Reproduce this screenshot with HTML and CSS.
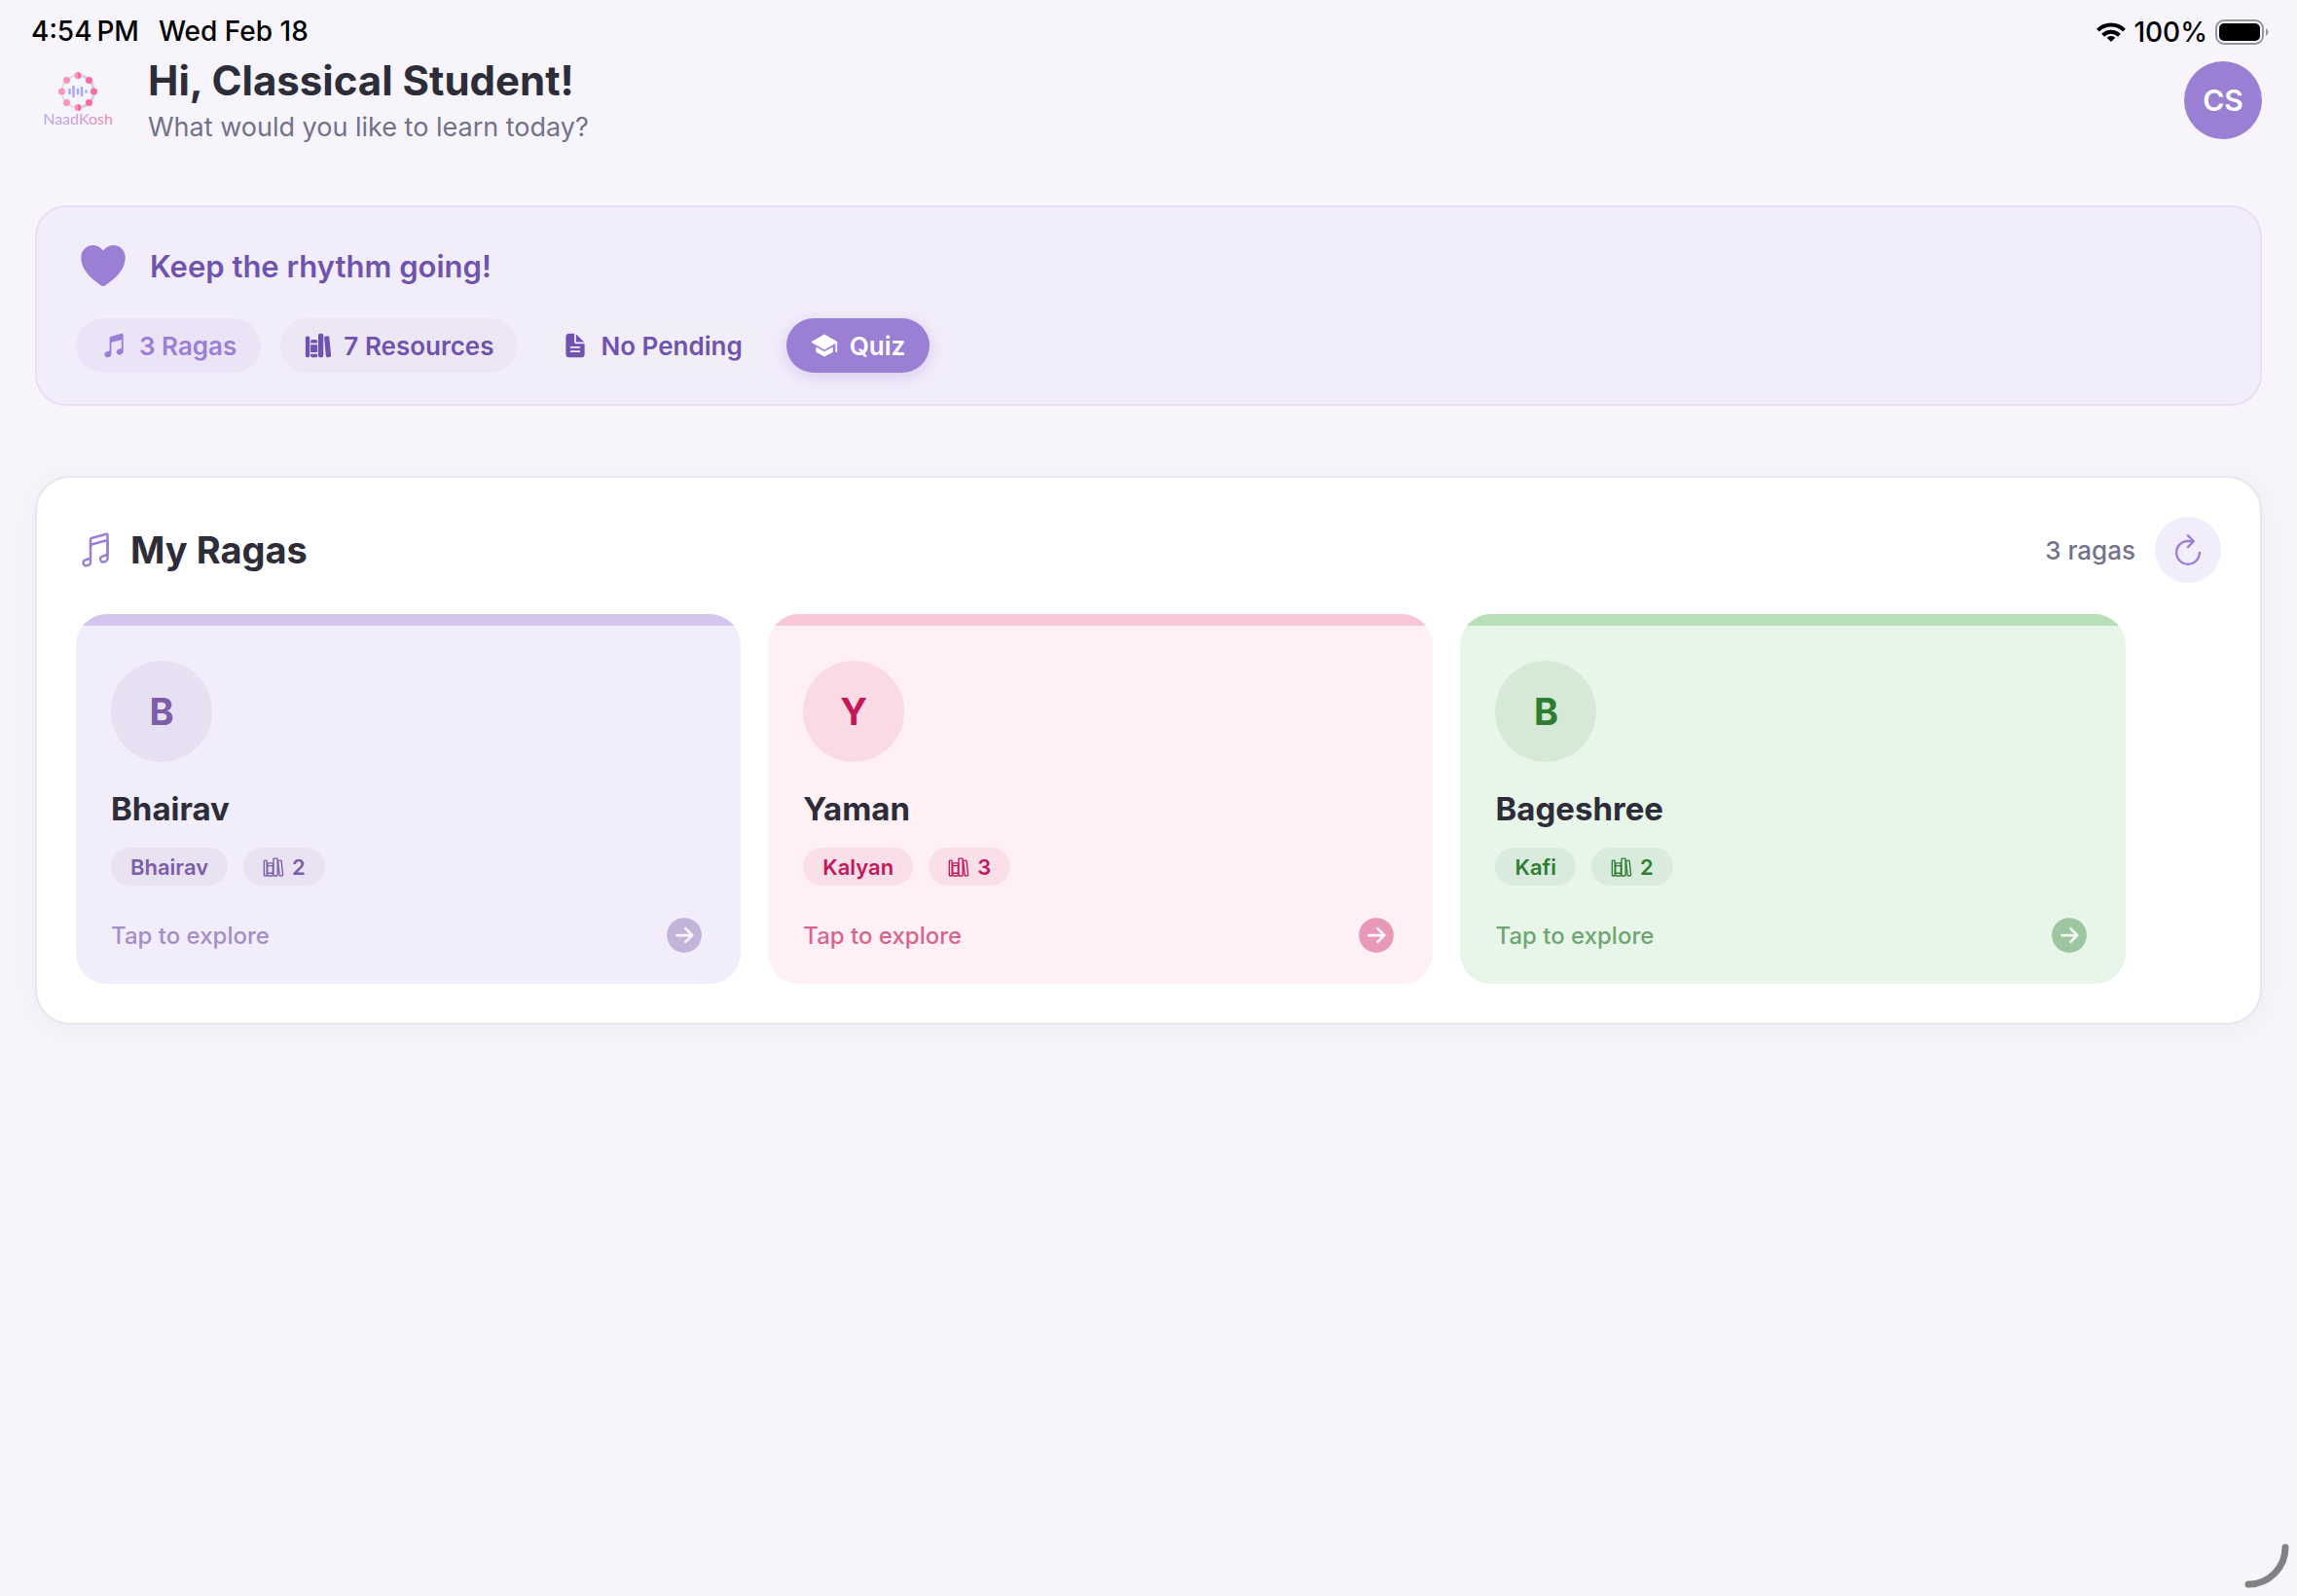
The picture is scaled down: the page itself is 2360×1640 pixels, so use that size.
FILE: index.html
```html
<!DOCTYPE html>
<html lang="en">
<head>
    <meta charset="UTF-8">
    <meta name="viewport" content="width=device-width, initial-scale=1.0">
    <title>NaadKosh</title>
    <link rel="stylesheet" href="styles.css">
</head>
<body>
    <!-- shared icons -->
    <svg class="sprite" aria-hidden="true">
        <symbol id="notes" viewBox="0 0 512 512">
            <path fill="currentColor" d="M421.84 37.37a25.86 25.86 0 00-22.6-4.46L199.92 86.49A32.3 32.3 0 00176 118v226c0 6.74-4.36 12.56-11.11 14.83l-.12.05-52 18C92.88 383.53 80 402 80 423.91a55.54 55.54 0 0023.23 45.63A54.78 54.78 0 00135.34 480a55.82 55.82 0 0017.75-2.93l.38-.13 21.84-7.94A47.84 47.84 0 00208 423.91v-212c0-7.29 4.77-13.21 12.16-15.07l.21-.06L395 150.14a4 4 0 015 3.86v141.93c0 6.75-4.25 12.38-11.11 14.68l-.25.09-50.89 18.11A49.09 49.09 0 00304 375.92a55.67 55.67 0 0023.23 45.8 54.63 54.63 0 0049.88 7.35l.36-.12 21.84-7.95A47.83 47.83 0 00432 375.92V58a25.74 25.74 0 00-10.16-20.63z"/>
        </symbol>
        <symbol id="books" viewBox="0 0 512 512">
            <g fill="none" stroke="currentColor" stroke-width="32" stroke-linejoin="round">
                <rect x="32" y="96" width="64" height="368" rx="16"/>
                <path d="M112 224h128M112 400h128"/>
                <rect x="112" y="160" width="128" height="304" rx="16"/>
                <rect x="256" y="48" width="96" height="416" rx="16"/>
                <path d="M422.46 96.11l-40.4 4.25c-11.12 1.17-19.18 11.57-17.93 23.1l34.92 321.59c1.26 11.53 11.37 20 22.49 18.84l40.4-4.25c11.12-1.17 19.18-11.57 17.93-23.1L445 115c-1.31-11.58-11.42-20.06-22.54-18.89z"/>
            </g>
        </symbol>
        <symbol id="arrow" viewBox="0 0 512 512">
            <path fill="currentColor" d="M256 48a208 208 0 100 416 208 208 0 000-416z"/>
            <path class="arrow-line" d="M168 256h176M272 176l80 80-80 80"/>
        </symbol>
    </svg>

    <div class="status">
        <div class="status-left">
            <span>4:54&thinsp;PM</span>
            <span>Wed Feb 18</span>
        </div>
        <div class="status-right">
            <svg class="wifi" viewBox="0 0 30 20">
                <g fill="none" stroke="#000" stroke-width="4">
                    <path d="M1.5 8.2a19 19 0 0 1 27 0"/>
                    <path d="M6.6 13.2a12 12 0 0 1 16.8 0"/>
                </g>
                <path d="M15 20l-4.300-4.300a6.200 6.200 0 0 1 8.600 0z"/>
            </svg>
            <span>100%</span>
            <svg class="battery" viewBox="0 0 56 26">
                <rect x="1" y="1" width="48" height="24" rx="8" fill="none" stroke="#98969b" stroke-width="2"/>
                <rect x="4" y="4" width="42" height="18" rx="5"/>
                <path d="M52 9a4.500 4.500 0 0 1 0 8z" fill="#98969b"/>
            </svg>
        </div>
    </div>

    <header class="header">
        <svg class="logo" viewBox="0 0 88 80" role="img" aria-label="NaadKosh">
            <defs>
                <linearGradient id="word" x1="0" x2="1">
                    <stop offset="0" stop-color="#aeaaf0"/>
                    <stop offset=".5" stop-color="#cf9fd8"/>
                    <stop offset="1" stop-color="#f288ae"/>
                </linearGradient>
                <linearGradient id="dot" x1="0" x2="1">
                    <stop offset=".5" stop-color="#ff94bb"/>
                    <stop offset=".5" stop-color="#ff6a9e"/>
                </linearGradient>
            </defs>
            <circle cx="44" cy="31" r="16.500" fill="none" stroke="#dfdcea" stroke-width="2"/>
            <path d="M44 14.500a16.500 16.500 0 0 1 0 33" fill="none" stroke="#cfd3ee" stroke-width="3"/>
            <g fill="#ff94bb">
                <circle cx="32.500" cy="19.500" r="3.500"/>
                <circle cx="27.500" cy="31" r="3.500"/>
                <circle cx="32.500" cy="42.500" r="3.500"/>
            </g>
            <g fill="#ff6a9e">
                <circle cx="55.500" cy="19.500" r="3.500"/>
                <circle cx="60.500" cy="31" r="3.500"/>
                <circle cx="55.500" cy="42.500" r="3.500"/>
            </g>
            <circle cx="44" cy="14.500" r="3.500" fill="url(#dot)"/>
            <circle cx="44" cy="47.500" r="3.500" fill="url(#dot)"/>
            <g fill="none" stroke="#a9a6f7" stroke-width="2.500" stroke-linecap="round">
                <path d="M35.500 29v4M39.500 26v10M44 29v4M48 27v8M52.500 30.500v1"/>
            </g>
            <text class="logo-text" x="44" y="65" text-anchor="middle" fill="url(#word)">NaadKosh</text>
        </svg>
        <div class="greeting">
            <h1>Hi, Classical Student!</h1>
            <p>What would you like to learn today?</p>
        </div>
        <button type="button" class="profile">CS</button>
    </header>

    <main>
        <section class="rhythm">
            <div class="rhythm-title">
                <svg class="heart" viewBox="0 0 512 512">
                    <path fill="currentColor" d="M256 448a32 32 0 01-18-5.57c-78.59-53.35-112.62-89.93-131.39-112.8-40-48.75-59.15-98.8-58.61-153C48.63 114.52 98.46 64 159.08 64c44.08 0 74.61 24.83 92.39 45.51a6 6 0 009.06 0C278.31 88.81 308.84 64 352.92 64 413.54 64 463.37 114.52 464 176.64c.54 54.21-18.63 104.26-58.61 153-18.77 22.87-52.8 59.45-131.39 112.8A32 32 0 01256 448z"/>
                </svg>
                <h2>Keep the rhythm going!</h2>
            </div>
            <div class="chips">
                <button type="button" class="chip chip-ragas">
                    <svg><use href="#notes"/></svg>3 Ragas
                </button>
                <button type="button" class="chip chip-resources">
                    <svg viewBox="0 0 512 512" fill="currentColor">
                        <path d="M64 480H48a32 32 0 01-32-32V112a32 32 0 0132-32h16a32 32 0 0132 32v336a32 32 0 01-32 32zM240 176a32 32 0 00-32-32h-64a32 32 0 00-32 32v28a4 4 0 004 4h120a4 4 0 004-4zM112 448a32 32 0 0032 32h64a32 32 0 0032-32v-30a2 2 0 00-2-2H114a2 2 0 00-2 2z"/>
                        <rect x="112" y="240" width="128" height="144" rx="2"/>
                        <path d="M320 480h-32a32 32 0 01-32-32V64a32 32 0 0132-32h32a32 32 0 0132 32v384a32 32 0 01-32 32zM495.89 445.45l-32.23-340c-1.48-15.65-16.94-27-34.53-25.31l-31.85 3c-17.59 1.67-30.65 15.71-29.17 31.36l32.23 340c1.48 15.65 16.94 27 34.53 25.31l31.85-3c17.59-1.67 30.65-15.71 29.17-31.36z"/>
                    </svg>7 Resources
                </button>
                <button type="button" class="chip chip-pending">
                    <svg viewBox="0 0 512 512" fill="currentColor">
                        <path d="M428 224H288a48 48 0 01-48-48V36a4 4 0 00-4-4h-92a64 64 0 00-64 64v320a64 64 0 0064 64h224a64 64 0 0064-64V228a4 4 0 00-4-4zm-92 160H176a16 16 0 010-32h160a16 16 0 010 32zm0-80H176a16 16 0 010-32h160a16 16 0 010 32z"/>
                        <path d="M419.22 188.59L275.41 44.78a2 2 0 00-3.41 1.41V176a16 16 0 0016 16h129.81a2 2 0 001.41-3.41z"/>
                    </svg>No Pending
                </button>
                <button type="button" class="chip chip-quiz">
                    <svg viewBox="0 0 512 512" fill="currentColor">
                        <path d="M256 368a16 16 0 01-7.94-2.11L108 285.84a8 8 0 00-12 6.94V368a16 16 0 008.23 14l144 80a16 16 0 0015.54 0l144-80a16 16 0 008.23-14v-75.22a8 8 0 00-12-6.94l-140.06 80.05A16 16 0 01256 368z"/>
                        <path d="M495.92 190.5v-.11a16 16 0 00-8-12.28l-224-128a16 16 0 00-15.88 0l-224 128a16 16 0 000 27.78l224 128a16 16 0 0015.88 0L461 221.28a2 2 0 013 1.74v144.53c0 8.61 6.62 16 15.23 16.43A16 16 0 00496 368V192a14.76 14.76 0 00-.08-1.5z"/>
                    </svg>Quiz
                </button>
            </div>
        </section>

        <section class="ragas">
            <div class="ragas-head">
                <svg class="ragas-icon" viewBox="0 0 512 512">
                    <g fill="none" stroke="currentColor" stroke-width="32" stroke-linecap="round" stroke-linejoin="round">
                        <path d="M192 218v-6c0-14.84 10-27 24.24-30.59l174.59-46.68A20 20 0 01416 154v22"/>
                        <path d="M416 295.94v80c0 13.91-8.93 25.59-22 30l-22 8c-25.9 8.72-52-10.42-52-38h0a33.37 33.37 0 0123-32l51-18.15c13.07-4.4 22-15.94 22-29.85V58a10 10 0 00-12.6-9.61L204 102a16.48 16.48 0 00-12 16v226c0 13.91-8.93 25.6-22 30l-52 18c-13.88 4.68-22 17.22-22 32h0c0 27.58 26.52 46.55 52 38l22-8c13.07-4.4 22-16.08 22-30v-80"/>
                        <path d="M416 160v150"/>
                    </g>
                </svg>
                <h2>My Ragas</h2>
                <span class="count">3 ragas</span>
                <button type="button" class="refresh" aria-label="Refresh">
                    <svg viewBox="0 0 512 512">
                        <g fill="none" stroke="currentColor" stroke-width="32" stroke-linecap="round">
                            <path d="M320 146s-24.360-12-64-12a160 160 0 10160 160"/>
                            <path d="M256 58l80 80-80 80" stroke-linejoin="round"/>
                        </g>
                    </svg>
                </button>
            </div>

            <div class="cards">
                <a href="#bhairav" class="card purple">
                    <span class="letter">B</span>
                    <h3>Bhairav</h3>
                    <div class="tags">
                        <span class="tag">Bhairav</span>
                        <span class="tag"><svg><use href="#books"/></svg>2</span>
                    </div>
                    <div class="explore">
                        <span>Tap to explore</span>
                        <svg><use href="#arrow"/></svg>
                    </div>
                </a>
                <a href="#yaman" class="card pink">
                    <span class="letter">Y</span>
                    <h3>Yaman</h3>
                    <div class="tags">
                        <span class="tag">Kalyan</span>
                        <span class="tag"><svg><use href="#books"/></svg>3</span>
                    </div>
                    <div class="explore">
                        <span>Tap to explore</span>
                        <svg><use href="#arrow"/></svg>
                    </div>
                </a>
                <a href="#bageshree" class="card green">
                    <span class="letter">B</span>
                    <h3>Bageshree</h3>
                    <div class="tags">
                        <span class="tag">Kafi</span>
                        <span class="tag"><svg><use href="#books"/></svg>2</span>
                    </div>
                    <div class="explore">
                        <span>Tap to explore</span>
                        <svg><use href="#arrow"/></svg>
                    </div>
                </a>
            </div>
        </section>
    </main>

    <svg class="corner" viewBox="0 0 48 48" aria-hidden="true">
        <path d="M42 4a38 38 0 0 1-38 38" fill="none" stroke="#828282" stroke-width="7" stroke-linecap="round"/>
    </svg>
</body>
</html>
```
FILE: styles.css
```css
* {
    box-sizing: border-box;
}

body {
    margin: 0;
    padding: 0 36px;
    min-height: 100vh;
    background-color: #f7f4fb;
    color: #2d2d3a;
    font-family: Inter, "Liberation Sans", sans-serif;
}

h1, h2, h3, p {
    margin: 0;
}

button {
    border: none;
    padding: 0;
    font-family: inherit;
    cursor: pointer;
}

svg {
    flex-shrink: 0;
}

.sprite {
    position: absolute;
    width: 0;
    height: 0;
}

/* status bar */
.status {
    display: flex;
    justify-content: space-between;
    height: 55px;
    padding-top: 10px;
    color: #000;
    font-size: 28px;
    font-weight: 500;
    line-height: 44px;
}

.status-left {
    display: flex;
    gap: 20px;
    margin-left: -4px;
}

.status-right {
    display: flex;
    align-items: center;
    gap: 8px;
    margin-right: -8px;
}

.wifi {
    width: 30px;
    height: 20px;
}

.battery {
    width: 56px;
    height: 26px;
}

/* header */
.header {
    display: flex;
    align-items: center;
    margin-bottom: 60px;
}

.logo {
    width: 88px;
    height: 80px;
    margin-right: 28px;
}

.logo-text {
    font-family: Lato, sans-serif;
    font-size: 16px;
}

.greeting {
    flex: 1;
}

.greeting h1 {
    font-size: 42px;
    line-height: 56px;
    font-weight: 700;
}

.greeting p {
    font-size: 27px;
    line-height: 40px;
    color: #72728a;
}

.profile {
    width: 80px;
    height: 80px;
    border-radius: 50%;
    background-color: #9b7fd4;
    color: #fff;
    font-size: 30px;
    font-weight: 600;
}

/* rhythm banner */
.rhythm {
    margin-bottom: 72px;
    padding: 32px 40px;
    background-color: #f2edfb;
    border: 2px solid #e6dff6;
    border-radius: 32px;
}

.rhythm-title {
    display: flex;
    align-items: center;
    gap: 20px;
    margin-bottom: 26px;
}

.rhythm-title h2 {
    color: #6f53ae;
    font-size: 31px;
    font-weight: 600;
}

.heart {
    width: 56px;
    height: 56px;
    color: #9b7fd4;
}

.chips {
    display: flex;
    gap: 20px;
}

.chip {
    display: flex;
    align-items: center;
    gap: 12px;
    height: 56px;
    padding: 0 25px;
    border-radius: 28px;
    color: #6f53ae;
    font-size: 26px;
    font-weight: 600;
}

.chip svg {
    width: 28px;
    height: 28px;
}

.chip-ragas {
    background-color: #ebe4f6;
    color: #9b7fd4;
}

.chip-resources {
    background-color: #ede7f5;
}

.chip-pending {
    background-color: #f1edf9;
}

.chip-quiz {
    background-color: #9b7fd4;
    color: #fff;
    box-shadow: 0 4px 16px rgba(155, 127, 212, 0.3);
}

/* ragas */
.ragas {
    padding: 40px;
    background-color: #fff;
    border: 2px solid #e8e4f0;
    border-radius: 36px;
    box-shadow: 0 4px 32px rgba(45, 45, 58, 0.04);
}

.ragas-head {
    display: flex;
    align-items: center;
    margin-bottom: 32px;
}

.ragas-icon {
    width: 40px;
    height: 40px;
    margin-right: 16px;
    color: #9b7fd4;
}

.ragas-head h2 {
    flex: 1;
    font-size: 38px;
    font-weight: 700;
}

.count {
    margin-right: 20px;
    color: #72728a;
    font-size: 26px;
    font-weight: 500;
}

.refresh {
    display: flex;
    align-items: center;
    justify-content: center;
    width: 68px;
    height: 68px;
    border-radius: 50%;
    background-color: #f2edfb;
    color: #9b7fd4;
}

.refresh svg {
    width: 38px;
    height: 38px;
}

.cards {
    display: flex;
    flex-wrap: wrap;
    gap: 28px;
}

.card {
    width: 31%;
    padding: 36px 36px 28px;
    border-radius: 32px;
    text-decoration: none;
    overflow: hidden;
}

/* coloured strip along the top */
.card::before {
    content: "";
    display: block;
    height: 12px;
    margin: -36px -36px 36px;
    background-color: var(--strip);
}

.purple {
    --strip: #d4c5ef;
    --soft: #e6e0f2;
    --tag: #e9e2f3;
    --deep: #7b5ea7;
    background-color: #f2edfb;
}

.pink {
    --strip: #f8c5d9;
    --soft: #fadae5;
    --tag: #fbdfe8;
    --deep: #c2185b;
    background-color: #fff0f5;
}

.green {
    --strip: #b8dfb8;
    --soft: #d5e9d6;
    --tag: #d9ebdc;
    --deep: #2e7d32;
    background-color: #e8f5e9;
}

.letter {
    display: flex;
    align-items: center;
    justify-content: center;
    width: 104px;
    height: 104px;
    margin-bottom: 26px;
    border-radius: 50%;
    background-color: var(--soft);
    color: var(--deep);
    font-size: 38px;
    font-weight: 700;
}

.card h3 {
    margin-bottom: 18px;
    color: #2d2d3a;
    font-size: 33px;
    line-height: 44px;
    font-weight: 700;
}

.tags {
    display: flex;
    gap: 16px;
    margin-bottom: 29px;
}

.tag {
    display: flex;
    align-items: center;
    gap: 8px;
    height: 39px;
    padding: 0 20px;
    border-radius: 20px;
    background-color: var(--tag);
    color: var(--deep);
    font-size: 22px;
    font-weight: 600;
}

.tag svg {
    width: 22px;
    height: 22px;
}

.explore {
    display: flex;
    align-items: center;
    justify-content: space-between;
    color: var(--deep);
    font-size: 24px;
    font-weight: 500;
}

.explore span {
    opacity: 0.65;
}

.explore svg {
    width: 44px;
    height: 44px;
    opacity: 0.4;
}

.arrow-line {
    fill: none;
    stroke: #fff;
    stroke-width: 32px;
    stroke-linecap: round;
    stroke-linejoin: round;
}

/* corner handle over the page */
.corner {
    position: fixed;
    right: 6px;
    bottom: 6px;
    width: 48px;
    height: 48px;
}
```
